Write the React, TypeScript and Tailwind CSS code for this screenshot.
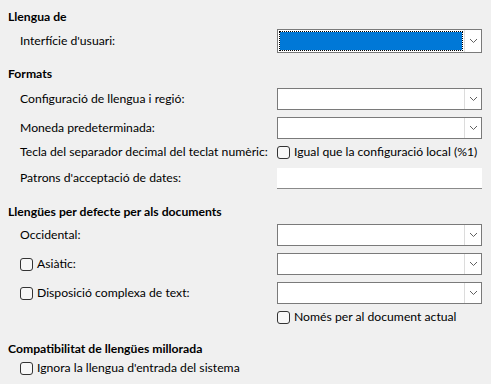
// App.tsx — language settings panel
const font = { fontFamily: 'Lato, "Noto Sans", "Liberation Sans", sans-serif' };

const Chevron = () => (
  <svg width="9" height="6" viewBox="0 0 9 6" fill="none">
    <path d="M1 1l3.5 3.5L8 1" stroke="#606060" strokeWidth="1" />
  </svg>
);

const Dropdown = ({ focused = false }: { focused?: boolean }) => (
  <div className="flex h-full w-[205px] border border-[#7a7a7a] bg-white">
    <div className="flex-1 p-[1px]">
      {focused && (
        <div className="h-full w-full border border-dotted border-black bg-[#0078d7] bg-clip-padding" />
      )}
    </div>
    <div className="flex w-[17px] items-center justify-center border-l border-[#dcdcdc] bg-white">
      <Chevron />
    </div>
  </div>
);

const Check = ({ label }: { label: string }) => (
  <label className="flex items-center gap-[4px] whitespace-nowrap">
    <span className="h-[13px] w-[13px] rounded-[3px] border border-[#333] bg-[#f7f7f7]" />
    <span>{label}</span>
  </label>
);

const Header = ({ text, mt }: { text: string; mt: string }) => (
  <div className={`flex h-[16px] items-center pl-2 font-bold ${mt}`}>{text}</div>
);

interface RowProps {
  label: React.ReactNode;
  children?: React.ReactNode;
  h: string;
  mt: string;
}

const Row = ({ label, children, h, mt }: RowProps) => (
  <div className={`flex items-center ${h} ${mt}`}>
    <div className="flex w-[277px] items-center whitespace-nowrap pl-5">{label}</div>
    <div className="flex h-full items-center">{children}</div>
  </div>
);

export default function App() {
  return (
    <div
      className="flex h-[384px] w-[491px] flex-col bg-[#f0f0f0] text-[12.2px] leading-none text-black"
      style={font}
    >
      <Header text="Llengua de" mt="mt-[9px]" />
      <Row label="Interfície d'usuari:" h="h-[24px]" mt="mt-[4px]">
        <Dropdown focused />
      </Row>

      <Header text="Formats" mt="mt-[13px]" />
      <Row label="Configuració de llengua i regió:" h="h-[22px]" mt="mt-[6px]">
        <Dropdown />
      </Row>
      <Row label="Moneda predeterminada:" h="h-[22px]" mt="mt-[7px]">
        <Dropdown />
      </Row>
      <Row label="Tecla del separador decimal del teclat numèric:" h="h-[16px]" mt="mt-[5px]">
        <Check label="Igual que la configuració local (%1)" />
      </Row>
      <Row label="Patrons d'acceptació de dates:" h="h-[21px]" mt="mt-[8px]">
        <div className="h-full w-[205px] border-b border-[#8a8a8a] bg-white" />
      </Row>

      <Header text="Llengües per defecte per als documents" mt="mt-[15px]" />
      <Row label="Occidental:" h="h-[22px]" mt="mt-[4px]">
        <Dropdown />
      </Row>
      <Row label={<Check label="Asiàtic:" />} h="h-[22px]" mt="mt-[7px]">
        <Dropdown />
      </Row>
      <Row label={<Check label="Disposició complexa de text:" />} h="h-[22px]" mt="mt-[7px]">
        <Dropdown />
      </Row>
      <Row label="" h="h-[16px]" mt="mt-[5px]">
        <Check label="Només per al document actual" />
      </Row>

      <Header text="Compatibilitat de llengües millorada" mt="mt-[16px]" />
      <div className="mt-[3px] flex h-[16px] items-center pl-5">
        <Check label="Ignora la llengua d'entrada del sistema" />
      </div>
    </div>
  );
}
